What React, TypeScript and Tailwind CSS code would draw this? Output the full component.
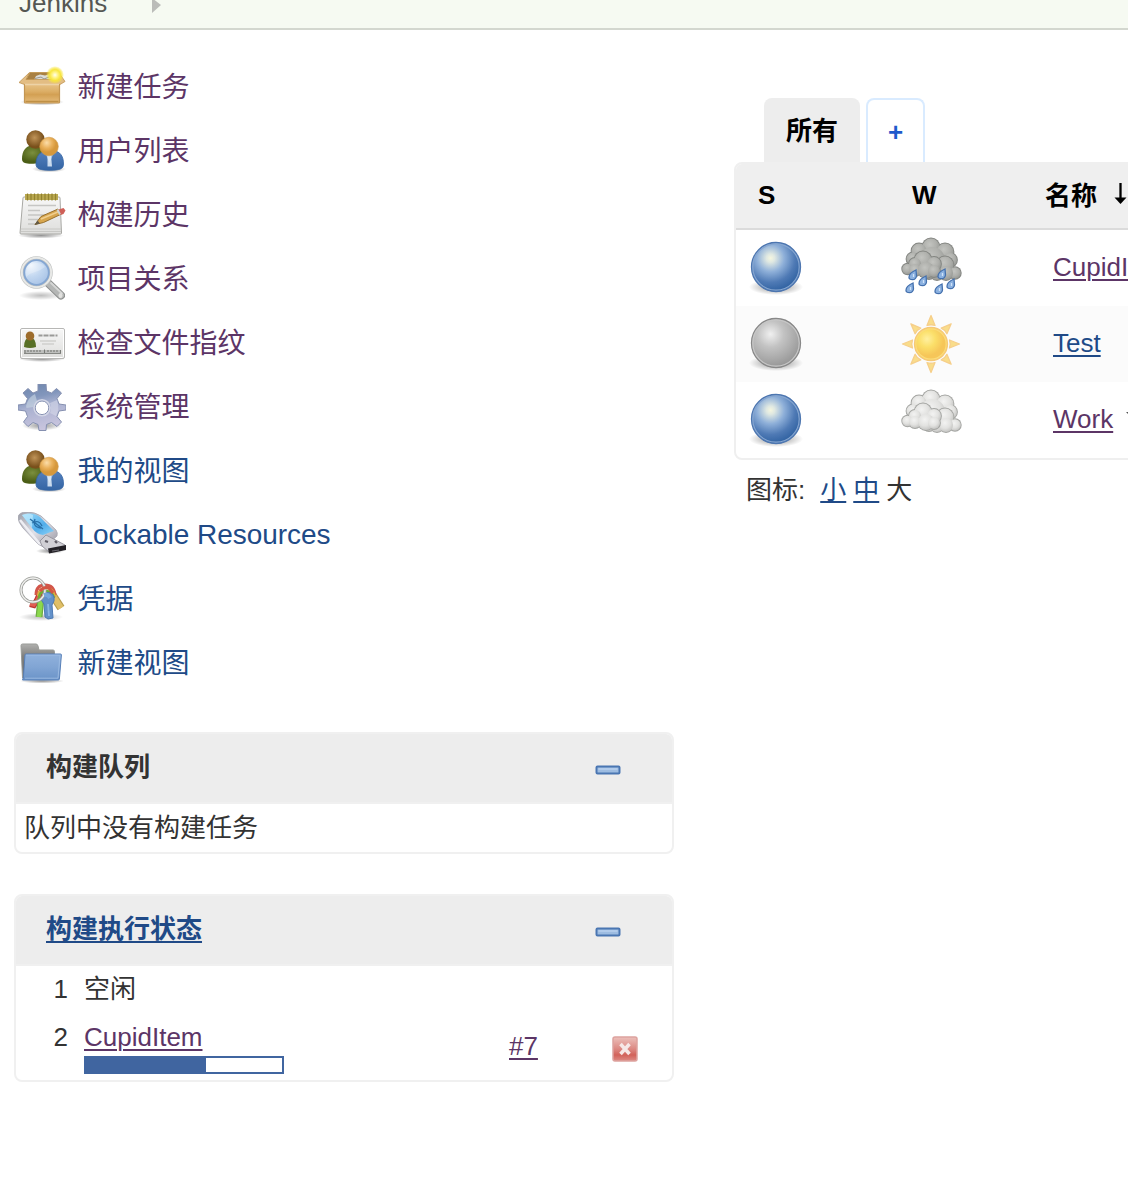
import React from "react";

function Defs() {
  return (
    <svg className="absolute h-0 w-0" aria-hidden="true">
      <defs>
        <linearGradient id="box" x1="0" y1="0" x2="0" y2="1"><stop offset="0" stopColor="#e9c78f" /><stop offset=".45" stopColor="#dcae66" /><stop offset=".6" stopColor="#d3a053" /><stop offset="1" stopColor="#e6bd7d" /></linearGradient>
        <radialGradient id="glow"><stop offset="0" stopColor="#fffef0" /><stop offset=".3" stopColor="#fff48a" /><stop offset=".6" stopColor="#f8e63c" /><stop offset=".8" stopColor="#f8e63c" stopOpacity=".6" /><stop offset="1" stopColor="#f8e63c" stopOpacity="0" /></radialGradient>
        <radialGradient id="shade"><stop offset="0" stopColor="#000" stopOpacity=".42" /><stop offset=".55" stopColor="#000" stopOpacity=".2" /><stop offset="1" stopColor="#000" stopOpacity="0" /></radialGradient>
        <radialGradient id="hairBack" cx=".45" cy=".4"><stop offset="0" stopColor="#c09458" /><stop offset="1" stopColor="#79501b" /></radialGradient>
        <radialGradient id="skin" cx=".38" cy=".3"><stop offset="0" stopColor="#fbdda9" /><stop offset=".6" stopColor="#e9b05a" /><stop offset="1" stopColor="#d6983c" /></radialGradient>
        <radialGradient id="green" cx=".4" cy=".4"><stop offset="0" stopColor="#7b8f3e" /><stop offset="1" stopColor="#4b5e16" /></radialGradient>
        <linearGradient id="shirt" x1="0" y1="0" x2="0" y2="1"><stop offset="0" stopColor="#5480bd" /><stop offset="1" stopColor="#3465a4" /></linearGradient>
        <linearGradient id="paper" x1="0" y1="0" x2="0" y2="1"><stop offset="0" stopColor="#f7f7f7" /><stop offset="1" stopColor="#dededc" /></linearGradient>
        <radialGradient id="lens" cx=".3" cy=".25" r=".8"><stop offset="0" stopColor="#f0f6fd" /><stop offset=".5" stopColor="#c2d7f0" /><stop offset="1" stopColor="#a4c0e5" /></radialGradient>
        <linearGradient id="gear" x1=".2" y1="0" x2=".45" y2="1"><stop offset="0" stopColor="#6f87ad" /><stop offset=".3" stopColor="#8296bc" /><stop offset=".5" stopColor="#a9b1d0" /><stop offset="1" stopColor="#c9c5de" /></linearGradient>
        <linearGradient id="usb" x1="0" y1="0" x2="1" y2="1"><stop offset="0" stopColor="#9a9ca6" /><stop offset=".5" stopColor="#e1e1e8" /><stop offset="1" stopColor="#9695a0" /></linearGradient>
        <linearGradient id="usbBlue" x1="0" y1="0" x2="1" y2="1"><stop offset="0" stopColor="#9bdcfa" /><stop offset=".6" stopColor="#52adea" /><stop offset="1" stopColor="#8dd4f8" /></linearGradient>
        <linearGradient id="folder" x1="0" y1="0" x2="0" y2="1"><stop offset="0" stopColor="#90b1dc" /><stop offset=".5" stopColor="#81a5d4" /><stop offset="1" stopColor="#6a93c8" /></linearGradient>
        <linearGradient id="folderBack" x1="0" y1="0" x2="0" y2="1"><stop offset="0" stopColor="#b0b0ae" /><stop offset=".35" stopColor="#81817f" /><stop offset="1" stopColor="#606060" /></linearGradient>
        <radialGradient id="ballBlue" cx=".39" cy=".32" r=".66"><stop offset="0" stopColor="#f5f6df" /><stop offset=".13" stopColor="#dfe8e2" /><stop offset=".42" stopColor="#8fb0d9" /><stop offset=".75" stopColor="#4f7ab5" /><stop offset="1" stopColor="#3465a4" /></radialGradient>
        <radialGradient id="ballGrey" cx=".39" cy=".32" r=".66"><stop offset="0" stopColor="#f0f0f0" /><stop offset=".4" stopColor="#c3c3c3" /><stop offset="1" stopColor="#999" /></radialGradient>
        <radialGradient id="storm" cx=".42" cy=".35" r=".65"><stop offset="0" stopColor="#c3c4c0" /><stop offset=".6" stopColor="#afb0ac" /><stop offset="1" stopColor="#989a96" /></radialGradient>
        <radialGradient id="cloud" cx=".42" cy=".35" r=".65"><stop offset="0" stopColor="#f3f3f2" /><stop offset=".6" stopColor="#e2e2e0" /><stop offset="1" stopColor="#c6c6c4" /></radialGradient>
        <radialGradient id="sun" cx=".38" cy=".35"><stop offset="0" stopColor="#fff0a0" /><stop offset=".5" stopColor="#fbdf69" /><stop offset="1" stopColor="#f6c659" /></radialGradient>
        <linearGradient id="stop" x1="0" y1="0" x2="0" y2="1"><stop offset="0" stopColor="#ecc0bb" /><stop offset=".5" stopColor="#dc8882" /><stop offset=".75" stopColor="#d2625a" /><stop offset="1" stopColor="#dd8b85" /></linearGradient>
      </defs>
    </svg>
  );
}

function Icon({ children }: { children: React.ReactNode }) {
  return <svg className="h-12 w-12 shrink-0 blur-[0.5px]" viewBox="0 0 48 48" fill="none">{children}</svg>;
}

function PackageIcon() {
  return (
    <Icon>
      <ellipse cx="24" cy="38" rx="22" ry="3.5" fill="url(#shade)" />
      <path d="M12 8.500h26l4 8H7.500z" fill="#a88042" stroke="#c39a58" />
      <path d="M16 16l2-4 4-1.500 5 1 5-1.500 3 2v4z" fill="#dcdcd6" />
      <path d="M17 14.500l6-1.500 3 2 5-2" stroke="#99978e" />
      <path d="M6.500 18h35v20q0 1-1 1h-33q-1 0-1-1z" fill="url(#box)" stroke="#c39654" strokeWidth="1.200" />
      <path d="M7.500 37.500h33" stroke="#bf9046" strokeWidth="1.500" />
      <path d="M11.500 8.500L8 15.500h33L38 8.500l3.500 1 5.500 8-5 3H6.500L1 18.500z" fill="#e3bd83" stroke="#c09452" strokeWidth=".8" />
      <path d="M7 20.500h34" stroke="#edd3a7" strokeWidth="1.500" />
      <circle cx="37" cy="11" r="9" fill="url(#glow)" />
    </Icon>
  );
}

function UsersIcon() {
  return (
    <Icon>
      <ellipse cx="31" cy="41" rx="17" ry="3.500" fill="url(#shade)" />
      <path d="M4 31c0-8 4-13 9-13.500h9c5 1 8 5 8 11v5c-5 2-20 3-23 1.500Q4 34 4 31z" fill="url(#green)" />
      <circle cx="17.500" cy="11.500" r="9.200" fill="url(#hairBack)" />
      <path d="M18 36c0-8 4-12.500 10-13h8c6 .5 9.500 5 9.500 13 0 5-3.500 6-13.500 6.300-10-.3-14-1.300-14-6.300z" fill="url(#shirt)" stroke="#3465a4" strokeWidth=".8" />
      <path d="M27 24h9l-4.500 11z" fill="#a9c6e6" /><path d="M29.500 26.500h3.500l1 12h-4.500z" fill="#e2edf8" opacity=".85" />
      <circle cx="31" cy="18.500" r="9.300" fill="url(#skin)" stroke="#d19a48" strokeWidth=".6" />
    </Icon>
  );
}

function NotepadIcon() {
  return (
    <Icon>
      <ellipse cx="23" cy="43.500" rx="23" ry="3" fill="url(#shade)" />
      <path d="M6 5h35q1 0 1 1l1.500 35q0 1-1 1H3q-1 0-1-1L5 6q0-1 1-1z" fill="url(#paper)" stroke="#a8a8a4" />
      <path d="M3 37h40M3 39.500h40" stroke="#c8c8c5" />
      <rect x="7" y="2" width="33" height="6" fill="#b9a850" />
      <path d="M9.500 1.500v7M13 1.500v7M16.500 1.500v7M20 1.500v7M23.500 1.500v7M27 1.500v7M30.500 1.500v7M34 1.500v7M37.500 1.500v7" stroke="#92822f" strokeWidth="1.200" />
      <path d="M10 13.500h28M10 18.500h12M10 23h19M10 27.500h13M10 32h8" stroke="#c6c6c4" strokeWidth="1.500" />
      <path d="M17 32.500l6-8 17-7.500 3.500 5-18 8.500z" fill="#d7a64e" stroke="#98702d" />
      <path d="M23 27l18-7.500" stroke="#f0cf8f" strokeWidth="1.500" />
      <path d="M16.500 33l3-4.500 2.500 3z" fill="#635b49" /><path d="M40.500 17.500l5-1.500 2 2.500-2 3.500-3 1z" fill="#cf6058" /><path d="M39.500 17.500l2.500 5" stroke="#cfd4d2" strokeWidth="2" />
    </Icon>
  );
}

function SearchIcon() {
  return (
    <Icon>
      <ellipse cx="23" cy="39.500" rx="22" ry="4.500" fill="url(#shade)" opacity=".6" />
      <path d="M30 27l13 12.500" stroke="#8d8f8e" strokeWidth="8" strokeLinecap="round" />
      <path d="M30 27l13 12.500" stroke="#b4b6b5" strokeWidth="6" strokeLinecap="round" />
      <path d="M33 27l11 10.500" stroke="#d6d7d6" strokeWidth="1.800" strokeLinecap="round" />
      <ellipse cx="42.500" cy="39.500" rx="2" ry="2.500" fill="#e1e1df" />
      <circle cx="18.500" cy="16.500" r="14.500" fill="url(#lens)" stroke="#bfc1c0" strokeWidth="3.600" />
      <circle cx="18.500" cy="16.500" r="14.700" stroke="#e8e9e7" strokeWidth="2" />
      <circle cx="18.500" cy="16.500" r="12.300" stroke="#84a6d2" strokeWidth="1.800" />
      <path d="M8 16q1-9 10-9 7 0 9 4-5 4-10 5-5 1-9 5z" fill="#fff" opacity=".25" />
    </Icon>
  );
}

function CardIcon() {
  return (
    <Icon>
      <ellipse cx="24" cy="39" rx="23" ry="3" fill="url(#shade)" />
      <rect x="2.500" y="8.500" width="44" height="30" rx="1.500" fill="url(#paper)" stroke="#b7b7b5" />
      <rect x="3.500" y="9.500" width="42" height="28" rx="1" stroke="#fff" />
      <path d="M6 27q0-9 6-10 6 1 6 10-6 2-12 0z" fill="#587026" /><ellipse cx="12" cy="16" rx="4.300" ry="4.500" fill="#9d6c2c" />
      <path d="M20.500 15.500h4m1 0h5m1 0h5m1 0h2" stroke="#999997" strokeWidth="2.200" /><path d="M22 21h16M24 24h12" stroke="#cfcfcd" strokeWidth="1.300" />
      <path d="M6 30h37v4H6z" fill="#bebfbd" /><path d="M7 30v4M10 30v2M13 30v2M16 30v2M19 30v2M22 30v2M26.500 29.500v4.500M30 30v2M33 30v2M36 30v2M39 30v2M42.500 30v4" stroke="#777a76" strokeWidth="1.100" /><path d="M6 33.500h37" stroke="#858783" />
    </Icon>
  );
}

function GearIcon() {
  return (
    <Icon>
      <ellipse cx="24" cy="41.500" rx="20" ry="5" fill="url(#shade)" />
      <path fillRule="evenodd" d="M20 0h8l.5 7 5 2 5-4.500 5 4.500-4.500 5.500 2 5.500 7 1v5l-7 1-2 5.500 4.500 5.500-4.500 4.500-5.500-4-5 2-.5 6h-7l-1-6-5-2-5 4L5.500 38l4-5.500-2-5.500-7.500-1v-5l7.500-1 2-5.500L5 9l5-4.500L15 9l5-2zM24 17a6.800 6.800 0 1 0 0 13.600A6.800 6.800 0 1 0 24 17z" fill="url(#gear)" stroke="#8590b0" strokeWidth="1" />
      <circle cx="24" cy="23.800" r="8" stroke="#d3d6e6" strokeWidth="1.500" />
      <path d="M9 19q2-6 8-9l2 7q-3 2-3.500 6l-7 1q-1-2 .5-5z" fill="#cbd8e4" opacity=".6" />
      <path d="M32 19l7-3q3 9-1 16l-6-3q2-5 0-10z" fill="#e1e3ef" opacity=".45" />
    </Icon>
  );
}

function UsbIcon() {
  return (
    <Icon>
      <ellipse cx="32" cy="39" rx="14" ry="3" fill="url(#shade)" />
      <path d="M0 5Q1 0 9 0q8 0 14 4l15 14q2 3 1 6L28 34q-5 1-8-2L5 16Q0 10 0 5z" fill="url(#usb)" stroke="#a5a4ae" strokeWidth=".8" />
      <path d="M2 8l19 23 4 2" stroke="#eeeef3" strokeWidth="2.500" />
      <path d="M4 3Q15-1 22 5l14 14q-4 1-11 4-7-1-11-7z" fill="url(#usbBlue)" />
      <path d="M4 3q6-3 11 0l-1 13z" fill="#c3ecff" opacity=".65" />
      <path d="M12 7l13 10M14 11q7-4 10 3M17 7q-3 8 6 9" stroke="#2870a8" strokeWidth="1.300" />
      <path d="M22 29l6-6 19 10v4l-16 3-7-6z" fill="#d1d0d5" stroke="#98969f" /><path d="M30 36.500l18-3.500v5l-17 3.500z" fill="#232126" />
      <path d="M27 29l3 1M37 29l2 2" stroke="#605d65" strokeWidth="2.300" /><path d="M34 39l7-1" stroke="#6b6971" />
    </Icon>
  );
}

function KeysIcon() {
  return (
    <Icon>
      <ellipse cx="23" cy="41" rx="22" ry="4" fill="url(#shade)" opacity=".6" />
      <path d="M34 18l9 14" stroke="#b59b4c" strokeWidth="8" /><path d="M34 18l9 14" stroke="#e0bf67" strokeWidth="6" />
      <path d="M22 16q-2 8-6 13l-4-1" stroke="#b93632" strokeWidth="6" /><path d="M22 16q-2 8-6 13l-4-1" stroke="#e35d52" strokeWidth="3.500" />
      <path d="M23 22l-2 19" stroke="#6dab42" strokeWidth="7" /><path d="M23 22l-2 19" stroke="#8bd84c" strokeWidth="4.500" />
      <path d="M18 19q0-10 9-10 9 0 10 10" stroke="#d3564a" strokeWidth="3" /><path d="M20 20q1-8 8-8 7 0 9 9" stroke="#dcae40" strokeWidth="2.500" /><path d="M21 23q0-8 7-8 6 0 8 7" stroke="#70ac34" strokeWidth="2.500" />
      <path d="M27 17q7-2 9 4 1 4-2 8l1 13-5 1-3-2-1-13q-4-4-2-7z" fill="#6290c9" stroke="#4c79b3" /><path d="M30 28l1 12" stroke="#88b3e3" strokeWidth="1.800" />
      <circle cx="15" cy="14" r="12" stroke="#999b97" strokeWidth="3" /><circle cx="15" cy="14" r="12" stroke="#efefed" strokeWidth="1.500" />
      <path d="M22 15q4-5 9-3l4 5" stroke="#d35644" strokeWidth="3" /><path d="M26 19q4-1 6 3" stroke="#75a6db" strokeWidth="4" />
    </Icon>
  );
}

function FolderIcon() {
  return (
    <Icon>
      <ellipse cx="24" cy="41" rx="22" ry="2.500" fill="url(#shade)" />
      <path d="M3 5.500q0-1.500 1.500-1.500H18q1.500 0 2 2l1 4h14q1.500 0 1.500 1.500V38H4.500z" fill="url(#folderBack)" stroke="#999b97" />
      <path d="M8 14h34.500q1 0 .9 1l-2 24q-.1 1-1.100 1H4.500q1-2 1-4l1.500-21q0-1 1-1z" fill="url(#folder)" stroke="#5880b8" strokeWidth="1" />
      <path d="M8 15.200h34l-2 23H7" stroke="#9dbce3" strokeWidth=".9" />
    </Icon>
  );
}

function Ball({ grey }: { grey?: boolean }) {
  return (
    <svg className="ml-2 h-16 w-16 blur-[0.4px]" viewBox="0 0 64 64" fill="none">
      <ellipse cx="32" cy="51" rx="27" ry="8" fill="url(#shade)" />
      <circle cx="32" cy="31" r="24.500" fill={grey ? "url(#ballGrey)" : "url(#ballBlue)"} stroke={grey ? "#888" : "#4d76b0"} strokeWidth="1.300" />
      <circle cx="32" cy="31" r="23.200" stroke={grey ? "#c6c6c6" : "#86a6d0"} strokeWidth="1.200" />
    </svg>
  );
}

/* Each bank of puffs is outlined first and filled second, so only its silhouette keeps a line. */
const banks = [
  [[32, 12, 8.5], [20, 16, 7.5], [46, 17, 8.5], [14, 24, 6.5], [51, 25, 7], [33, 25, 13]],
  [[46, 30, 8.5], [56, 38, 5.8], [38, 38, 7], [47, 38, 7], [30, 38, 6]],
  [[24, 25, 8.5], [35, 29, 7], [16, 29, 6], [8.5, 34, 5.3], [16, 35, 6], [27, 35, 8], [35, 36, 6]],
];

function CloudShapes({ fill, line }: { fill: string; line: string }) {
  return (
    <g>
      {banks.map((bank, i) => (
        <g key={i}>
          {bank.map(([x, y, r], j) => <circle key={j} cx={x} cy={y} r={r + 0.9} fill={line} />)}
          {bank.map(([x, y, r], j) => <circle key={j} cx={x} cy={y} r={r} fill={fill} />)}
        </g>
      ))}
    </g>
  );
}

const drops = [[10, 39], [20, 45], [39, 38], [48, 48], [7, 52], [36, 53]];

function RainIcon() {
  return (
    <svg className="h-16 w-16 blur-[0.4px]" viewBox="0 0 64 64" fill="none">
      <CloudShapes fill="url(#storm)" line="#838581" />
      {drops.map(([x, y]) => (
        <g key={`${x}-${y}`} transform={`translate(${x} ${y})`}>
          <path d="M7-4Q0-1 0 3.200q0 2.500 3.600 2.500Q7 5.500 7.500 2z" fill="#8bb1e0" stroke="#4571ae" strokeWidth="1.300" />
          <path d="M4.500 0v3" stroke="#cfe2f8" strokeWidth="1.300" />
        </g>
      ))}
    </svg>
  );
}

function CloudIcon() {
  return <svg className="h-16 w-16 blur-[0.4px]" viewBox="0 0 64 64" fill="none"><CloudShapes fill="url(#cloud)" line="#a3a4a1" /></svg>;
}

function SunIcon() {
  return (
    <svg className="h-16 w-16 blur-[0.4px]" viewBox="0 0 64 64" fill="none">
      {[0, 45, 90, 135, 180, 225, 270, 315].map((a) => (
        <path key={a} transform={`rotate(${a} 32 32)`} d="M32 3.500L28 13.500q4-1.500 8 0z" fill="#f9dd8a" stroke="#f6cf8b" strokeWidth="1.300" strokeLinejoin="round" />
      ))}
      <circle cx="32" cy="32" r="16.500" fill="url(#sun)" stroke="#f5c878" strokeWidth="1.300" />
      <circle cx="32" cy="32" r="15.200" stroke="#fbdc79" strokeWidth="1.200" />
    </svg>
  );
}

const tasks = [
  { label: "新建任务", icon: PackageIcon, tone: "-mt-px text-[#5c3566]" },
  { label: "用户列表", icon: UsersIcon, tone: "-mt-px text-[#5c3566]" },
  { label: "构建历史", icon: NotepadIcon, tone: "-mt-px text-[#5c3566]" },
  { label: "项目关系", icon: SearchIcon, tone: "-mt-px text-[#5c3566]" },
  { label: "检查文件指纹", icon: CardIcon, tone: "-mt-px text-[#5c3566]" },
  { label: "系统管理", icon: GearIcon, tone: "-mt-px text-[#5c3566]" },
  { label: "我的视图", icon: UsersIcon, tone: "-mt-px text-[#204a87]" },
  { label: "Lockable Resources", icon: UsbIcon, tone: "-mt-[3px] tracking-[-0.04px] text-[#204a87]" },
  { label: "凭据", icon: KeysIcon, tone: "-mt-px text-[#204a87]" },
  { label: "新建视图", icon: FolderIcon, tone: "-mt-px text-[#204a87]" },
];

function Minus() {
  return (
    <svg className="h-[10px] w-[26px]" viewBox="0 0 26 10">
      <rect x="1.500" y="1.500" width="23" height="7" rx="1" fill="#9dbce1" stroke="#4a76b2" strokeWidth="2" />
      <path d="M3.500 4h19" stroke="#b9d1ee" strokeWidth="1.500" />
    </svg>
  );
}

function Pane({ title, className, children }: { title: React.ReactNode; className: string; children: React.ReactNode }) {
  return (
    <section className={`ml-[14px] w-[660px] overflow-hidden rounded-lg border-2 border-[#f0f0f0] ${className}`}>
      <header className="flex h-[70px] items-center justify-between border-b-2 border-[#f0f0f0] bg-[#ededed] pr-[51px] pl-[30px] font-bold">
        <h2 className="-mt-[2px]">{title}</h2>
        <div className="mt-1 flex"><Minus /></div>
      </header>
      {children}
    </section>
  );
}

export default function App() {
  return (
    <div className="h-[1202px] w-full overflow-hidden bg-white font-['Liberation_Sans','Noto_Sans_CJK_SC',sans-serif] text-[26px] leading-[36px] text-[#333]">
      <Defs />
      <nav className="flex h-[30px] items-end border-b-2 border-[#d3d7cf] bg-[#f6faf2] pl-[19px]">
        <span className="mb-[7px] text-[#555753]">Jenkins</span>
        <svg className="mb-[15px] ml-[44px] h-[16px] w-[11px]" viewBox="0 0 11 16"><path d="M1 1l9 7-9 8z" fill="#bbbcb9" /></svg>
      </nav>
      <div className="flex">
        <aside className="w-[734px] shrink-0 pt-[26px]">
          <ul className="text-[28px]">
            {tasks.map(({ label, icon: TaskIcon, tone }) => (
              <li key={label} className="flex h-16 items-center gap-[11.500px] pl-[18px]">
                <TaskIcon />
                <a className={tone}>{label}</a>
              </li>
            ))}
          </ul>
          <Pane title="构建队列" className="mt-[36px] h-[122px]">
            <p className="mt-[6px] pl-[8px]">队列中没有构建任务</p>
          </Pane>
          <Pane title={<a className="text-[#204a87] underline decoration-2 underline-offset-[3px]">构建执行状态</a>} className="mt-[40px] h-[188px]">
            <div className="grid grid-cols-[68px_425px_104px_auto]">
              <span className="pt-[5px] pr-4 text-right">1</span>
              <span className="col-span-3 pt-[5px]">空闲</span>
              <span className="mt-[12px] pr-4 text-right">2</span>
              <div className="mt-[12px]">
                <a className="block text-[#5c3566] underline decoration-2 underline-offset-[3px]">CupidItem</a>
                <div className="mt-[1px] h-[18px] w-[200px] border-2 border-[#4065a0]"><div className="h-full w-[120px] bg-[#4065a0]" /></div>
              </div>
              <a className="mt-[21px] text-[#5c3566] underline decoration-2 underline-offset-[3px]">#7</a>
              <svg className="mt-[29px] -ml-px h-[26px] w-[26px] blur-[0.4px]" viewBox="0 0 26 26">
                <rect x="1" y="1" width="24" height="24" rx="2" fill="url(#stop)" stroke="#dda39f" strokeWidth="1.500" />
                <path d="M8.500 8l9 10M17.500 8l-9 10" stroke="#f6e8e7" strokeWidth="3.500" />
              </svg>
            </div>
          </Pane>
        </aside>
        <main className="w-[900px] shrink-0 pt-[68px]">
          <div className="flex h-16 items-stretch gap-[6px] pl-[30px] font-bold">
            <div className="w-24 rounded-t-lg bg-[#ededed] pt-[15px] text-center text-black">所有</div>
            <div className="w-[59px] rounded-t-lg border-2 border-b-0 border-[#d9ebff] pt-[14px] text-center text-[#1f5acb]">+</div>
          </div>
          <div className="h-[298px] overflow-hidden rounded-lg border-2 border-[#efefef]">
            <div className="grid h-[66px] grid-cols-[154px_156px_1fr] items-center border-b-2 border-[#dbdbdb] bg-[#efefef] font-bold text-black">
              <span className="-mt-[2px] pl-[22px]">S</span>
              <span className="-mt-[2px] pl-[22px]">W</span>
              <span className="-ml-px flex items-center gap-[16px]">
                <span>名称</span>
                <svg className="-mt-1 h-[22px] w-[14px]" viewBox="0 0 14 22"><path d="M7.500 0v18" stroke="#000" strokeWidth="2.300" /><path d="M1.500 14.500h12L7.500 21z" /></svg>
              </span>
            </div>
            <div className="grid h-[76px] grid-cols-[154px_153px_1fr]">
              <div className="pt-[6px]"><Ball /></div>
              <div className="pt-[5px] pl-[9px]"><RainIcon /></div>
              <a className="mt-[19px] pl-[10px] text-[#5c3566] underline decoration-2 underline-offset-[3px]">CupidItem</a>
            </div>
            <div className="grid h-[76px] grid-cols-[154px_153px_1fr] bg-[#fbfbfb]">
              <div className="pt-[6px]"><Ball grey /></div>
              <div className="pt-[6px] pl-[9px]"><SunIcon /></div>
              <a className="mt-[19px] pl-[10px] text-[#204a87] underline decoration-2 underline-offset-[3px]">Test</a>
            </div>
            <div className="grid h-[76px] grid-cols-[154px_153px_1fr]">
              <div className="pt-[6px]"><Ball /></div>
              <div className="pt-[5px] pl-[9px]"><CloudIcon /></div>
              <div className="mt-[19px] flex gap-[12px] pl-[10px]">
                <a className="text-[#5c3566] underline decoration-2 underline-offset-[3px]">Work</a>
                <svg className="mt-[9px] h-2 w-3" viewBox="0 0 12 8"><path d="M1 2h10L6 7z" fill="#555" /></svg>
              </div>
            </div>
          </div>
          <p className="mt-[12px] flex gap-[7px] pl-[12px]">
            <span className="mr-[8px]">图标:</span>
            <a className="text-[#204a87] underline decoration-2 underline-offset-[2px]">小</a>
            <a className="text-[#204a87] underline decoration-2 underline-offset-[2px]">中</a>
            <span>大</span>
          </p>
        </main>
      </div>
    </div>
  );
}
